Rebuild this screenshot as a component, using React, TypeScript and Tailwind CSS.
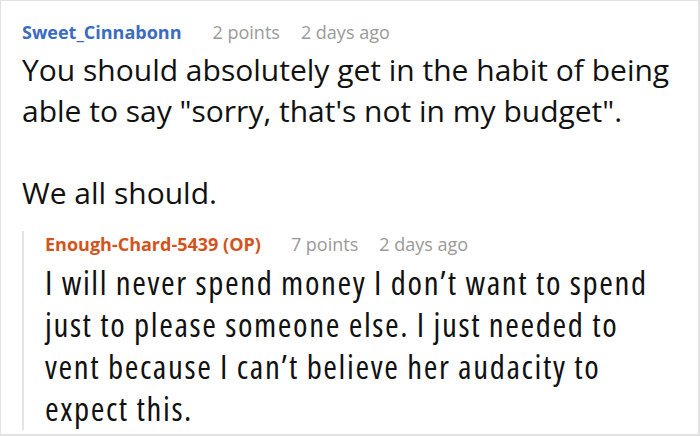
import React from "react";

export default function App() {
  return (
    <div
      className="w-[700px] h-[436px] bg-white border-t border-l border-r-2 border-b-2 border-[#e2e2e2] overflow-hidden"
      style={{ fontFamily: '"Open Sans", "Noto Sans", sans-serif' }}
    >
      <div className="pl-[21px] pt-[18px]">
        <div className="flex items-baseline text-[18px] leading-[26px]">
          <span className="font-bold text-[#3a6cc0]">Sweet_Cinnabonn</span>
          <span className="ml-[31px] text-[#9a9a9a]">2 points</span>
          <span className="ml-[21px] text-[#9a9a9a]">2 days ago</span>
        </div>
        <div className="mt-[4px] text-[30px] leading-[41px] text-[#111]">
          <p>You should absolutely get in the habit of being</p>
          <p>able to say "sorry, that's not in my budget".</p>
          <p className="mt-[41px]">We all should.</p>
        </div>
        <div className="mt-[18px] border-l-2 border-[#e4e4e4] pl-[21px]">
          <div className="flex items-baseline text-[18px] leading-[26px]">
            <span className="font-bold text-[#d4531c]">Enough-Chard-5439 (OP)</span>
            <span className="ml-[30px] text-[#9a9a9a]">7 points</span>
            <span className="ml-[21px] text-[#9a9a9a]">2 days ago</span>
          </div>
          <div
            className="mt-[5px] text-[33px] leading-[42px] tracking-[1.6px] text-[#111] whitespace-nowrap"
            style={{ fontStretch: "condensed" }}
          >
            <p>I will never spend money I don’t want to spend</p>
            <p>just to please someone else. I just needed to</p>
            <p>vent because I can’t believe her audacity to</p>
            <p>expect this.</p>
          </div>
        </div>
      </div>
    </div>
  );
}
